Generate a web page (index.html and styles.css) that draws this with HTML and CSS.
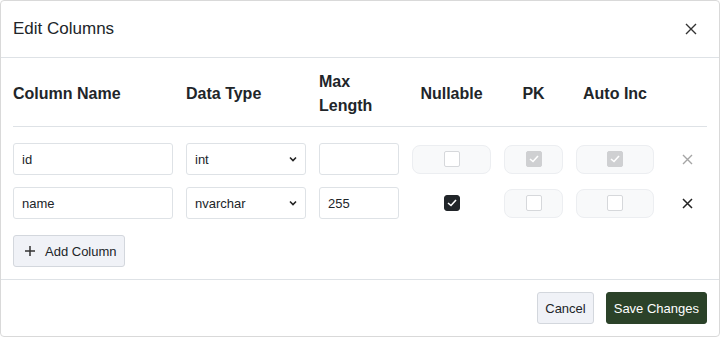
FILE: index.html
```html
<!DOCTYPE html>
<html lang="en">
<head>
  <meta charset="UTF-8" />
  <title>Edit Columns</title>
  <link rel="stylesheet" href="styles.css">
</head>
<body>
  <div class="modal">
    <div class="modal-header">
      <h2 class="modal-title">Edit Columns</h2>
      <button class="icon-btn close-btn" aria-label="Close">
        <svg width="12" height="12" viewBox="0 0 12 12"><path d="M1 1L11 11M11 1L1 11" stroke="#333" stroke-width="1.4" fill="none"/></svg>
      </button>
    </div>

    <div class="modal-body">
      <div class="col-row head-row">
        <div class="th">Column Name</div>
        <div class="th">Data Type</div>
        <div class="th">Max<br>Length</div>
        <div class="th center">Nullable</div>
        <div class="th center">PK</div>
        <div class="th center">Auto Inc</div>
        <div class="th"></div>
      </div>

      <!-- id column -->
      <div class="col-row data-row">
        <input class="field" type="text" value="id">
        <div class="select-wrap">
          <select class="field select"><option>int</option></select>
          <svg class="chevron" width="8" height="6" viewBox="0 0 8 6"><path d="M1 1.5L4 4.5L7 1.5" stroke="#222" stroke-width="1.6" fill="none"/></svg>
        </div>
        <input class="field" type="text" value="">
        <div class="check-cell"><span class="check"></span></div>
        <div class="check-cell"><span class="check checked-muted"><svg width="10" height="8" viewBox="0 0 10 8"><path d="M1 4L4 6.5L9 1" stroke="#fff" stroke-width="1.6" fill="none"/></svg></span></div>
        <div class="check-cell"><span class="check checked-muted"><svg width="10" height="8" viewBox="0 0 10 8"><path d="M1 4L4 6.5L9 1" stroke="#fff" stroke-width="1.6" fill="none"/></svg></span></div>
        <button class="icon-btn remove-btn muted" aria-label="Remove">
          <svg width="11" height="11" viewBox="0 0 11 11"><path d="M1 1L10 10M10 1L1 10" stroke="#a5a5a5" stroke-width="1.4" fill="none"/></svg>
        </button>
      </div>

      <!-- name column -->
      <div class="col-row data-row">
        <input class="field" type="text" value="name">
        <div class="select-wrap">
          <select class="field select"><option>nvarchar</option></select>
          <svg class="chevron" width="8" height="6" viewBox="0 0 8 6"><path d="M1 1.5L4 4.5L7 1.5" stroke="#222" stroke-width="1.6" fill="none"/></svg>
        </div>
        <input class="field" type="text" value="255">
        <div class="check-plain"><span class="check checked"><svg width="10" height="8" viewBox="0 0 10 8"><path d="M1 4L4 6.5L9 1" stroke="#fff" stroke-width="1.6" fill="none"/></svg></span></div>
        <div class="check-cell"><span class="check"></span></div>
        <div class="check-cell"><span class="check"></span></div>
        <button class="icon-btn remove-btn" aria-label="Remove">
          <svg width="11" height="11" viewBox="0 0 11 11"><path d="M1 1L10 10M10 1L1 10" stroke="#222" stroke-width="1.5" fill="none"/></svg>
        </button>
      </div>

      <button class="btn btn-light add-btn">
        <svg width="12" height="12" viewBox="0 0 12 12"><path d="M6 1V11M1 6H11" stroke="#333" stroke-width="1.5" fill="none"/></svg>
        Add Column
      </button>
    </div>

    <div class="modal-footer">
      <button class="btn btn-light">Cancel</button>
      <button class="btn btn-dark">Save Changes</button>
    </div>
  </div>
</body>
</html>
```

FILE: styles.css
```css
body, html {
  margin: 0;
  padding: 0;
  background: #ffffff;
  font-family: "Liberation Sans", Arial, sans-serif;
  color: #212529;
}
.modal {
  width: 720px;
  height: 337px;
  box-sizing: border-box;
  border: 1px solid #d9d9d9;
  border-radius: 4px;
  background: #ffffff;
  display: flex;
  flex-direction: column;
}
.modal-header {
  display: flex;
  align-items: center;
  justify-content: space-between;
  padding: 16px 12px;
  border-bottom: 1px solid #dee2e6;
}
.modal-title {
  margin: 0;
  font-size: 17px;
  font-weight: 400;
  line-height: 24px;
}
.icon-btn {
  background: none;
  border: none;
  padding: 0;
  cursor: pointer;
  display: flex;
  align-items: center;
  justify-content: center;
}
.close-btn {
  width: 24px;
  height: 24px;
  margin-right: 4px;
}
.modal-body {
  flex: 1;
  padding: 0 12px 12px;
  border-bottom: 1px solid #dee2e6;
}
.col-row {
  display: grid;
  grid-template-columns: 160px 120px 80px 79px 59px 78px 40px;
  column-gap: 13px;
  align-items: center;
}
.head-row {
  padding: 12px 0 8px;
  border-bottom: 1px solid #dee2e6;
}
.th {
  font-size: 16px;
  font-weight: 700;
  line-height: 24px;
}
.th.center {
  text-align: center;
}
.data-row {
  height: 32px;
  margin-top: 12px;
}
.head-row + .data-row {
  margin-top: 16px;
}
.field {
  width: 100%;
  height: 32px;
  box-sizing: border-box;
  border: 1px solid #dee2e6;
  border-radius: 3px;
  padding: 0 8px;
  font-family: inherit;
  font-size: 13px;
  color: #212529;
  background: #ffffff;
  outline: none;
}
.select-wrap {
  position: relative;
}
.select {
  appearance: none;
  -webkit-appearance: none;
}
.chevron {
  position: absolute;
  right: 9px;
  top: 13px;
  pointer-events: none;
}
.check-cell {
  height: 29px;
  box-sizing: border-box;
  background: #f8f9fa;
  border: 1px solid #eceef1;
  border-radius: 8px;
  display: flex;
  align-items: center;
  justify-content: center;
}
.check-plain {
  display: flex;
  align-items: center;
  justify-content: center;
}
.check {
  width: 16px;
  height: 16px;
  box-sizing: border-box;
  border: 1px solid #d6d8db;
  border-radius: 2px;
  background: #ffffff;
  display: flex;
  align-items: center;
  justify-content: center;
}
.check.checked-muted {
  background: #cfd0d2;
  border-color: #cfd0d2;
}
.check.checked {
  background: #212529;
  border-color: #212529;
  border-radius: 3px;
}
.remove-btn {
  height: 32px;
  width: 40px;
}
.btn {
  height: 32px;
  box-sizing: border-box;
  border-radius: 3px;
  padding: 0 7px;
  font-family: inherit;
  font-size: 13px;
  cursor: pointer;
  display: inline-flex;
  align-items: center;
}
.btn-light {
  background: #f0f2f7;
  border: 1px solid #d3d7dd;
  color: #212529;
}
.btn-dark {
  background: #2b4229;
  border: 1px solid #2b4229;
  color: #ffffff;
}
.add-btn {
  margin-top: 16px;
  gap: 9px;
  padding: 0 7px 0 10px;
}
.modal-footer {
  display: flex;
  justify-content: flex-end;
  gap: 12px;
  padding: 12px 12px;
}
```
